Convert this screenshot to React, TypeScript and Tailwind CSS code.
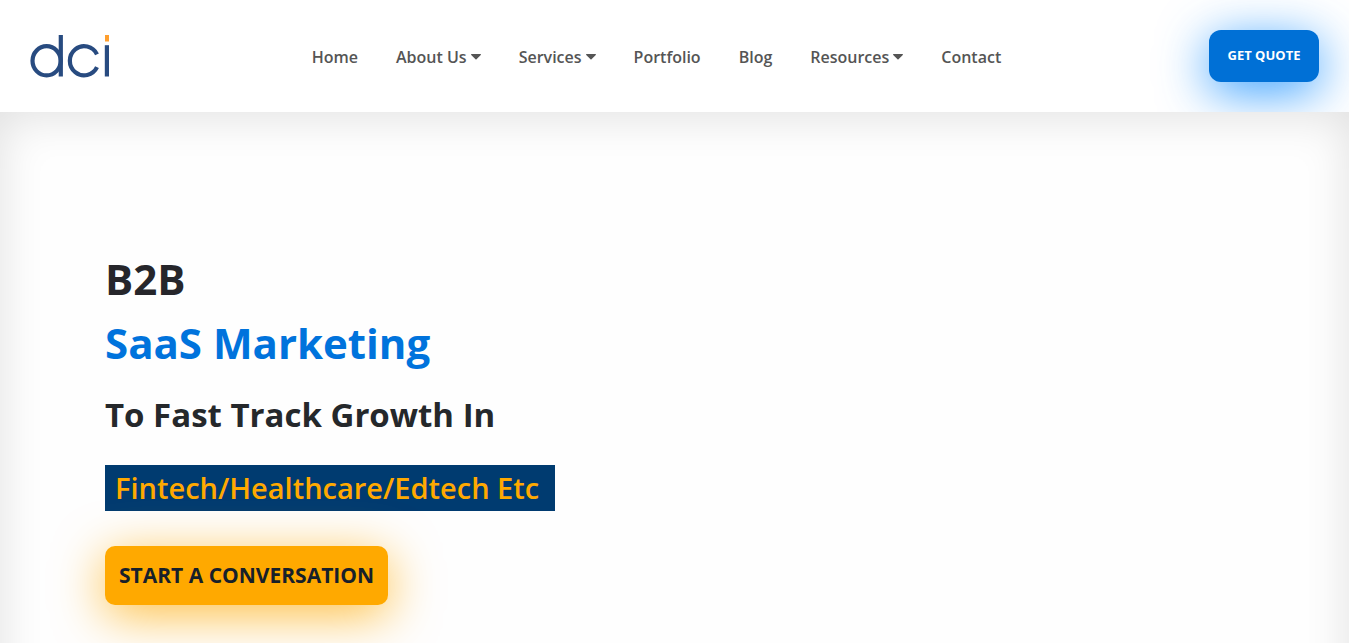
type NavItem = { label: string; menu?: boolean };

const navItems: NavItem[] = [
  { label: "Home" },
  { label: "About Us", menu: true },
  { label: "Services", menu: true },
  { label: "Portfolio" },
  { label: "Blog" },
  { label: "Resources", menu: true },
  { label: "Contact" },
];

function Logo() {
  return (
    <svg width="80" height="44" viewBox="0 0 80 44" fill="none" role="img" aria-label="dci">
      <g stroke="#284b80" strokeWidth="4.2">
        <ellipse cx="16.6" cy="26.8" rx="14.1" ry="14.6" />
        <path d="M30.8 1v41.5" />
        <path d="M67 20.4A14.3 14.6 0 1 0 67 33.2" />
        <path d="M76.9 11.2v31.3" />
      </g>
      <rect x="75" y="1" width="4" height="6.5" fill="#ff9f2e" />
    </svg>
  );
}

function Caret() {
  return (
    <svg width="10" height="6" viewBox="0 0 10 6" fill="#555" aria-hidden="true">
      <path d="M.6 0h8.8c.5 0 .8.6.4 1L5.5 5.2a.7.7 0 0 1-1 0L.2 1C-.2.6.1 0 .6 0Z" />
    </svg>
  );
}

function Header() {
  return (
    <header className="flex h-28 shrink-0 items-center justify-between overflow-hidden px-[30px]">
      <a href="#home" className="w-[74px]">
        <Logo />
      </a>
      <nav className="flex items-center gap-[38px] pt-0.5 text-base font-semibold text-[#555]">
        {navItems.map((item) => (
          <a key={item.label} href="#" className="flex items-center gap-1">
            {item.label}
            {item.menu && <Caret />}
          </a>
        ))}
      </nav>
      <a
        href="#quote"
        className="flex h-[52px] w-[110px] items-center justify-center rounded-xl bg-[#0070d6] text-[13px] font-bold whitespace-nowrap text-white shadow-[0_10px_50px_rgba(0,132,255,0.8)]"
      >
        GET QUOTE
      </a>
    </header>
  );
}

function Hero() {
  return (
    <main className="flex shrink-0 grow flex-col items-start bg-[#fefefe] px-[105px] pt-[135px] pb-40 shadow-[inset_0_4px_46px_rgba(0,0,0,0.12)]">
      <h1 className="text-[42px] leading-16 font-bold text-[#26262b]">
        B2B
        <span className="block text-[#0073dc]">SaaS Marketing</span>
      </h1>
      <h2 className="mt-4 text-[33px] leading-12 font-bold text-[#25282b]">To Fast Track Growth In</h2>
      <p className="mt-[26px] flex h-[46px] items-center bg-[#003b70] pr-4 pl-2.5 text-[29px] font-semibold text-[#ffa900]">
        Fintech/Healthcare/Edtech Etc
      </p>
      <a
        href="#contact"
        className="mt-[35px] flex h-[59px] items-center rounded-[10px] bg-[#ffa900] px-3.5 text-[21px] font-bold text-[#17202a] shadow-[0_10px_50px_rgba(255,169,0,0.75)]"
      >
        START A CONVERSATION
      </a>
    </main>
  );
}

export default function App() {
  return (
    <div className="flex h-screen flex-col overflow-hidden bg-white pr-[17px] font-['Open_Sans',sans-serif]">
      <Header />
      <Hero />
    </div>
  );
}
